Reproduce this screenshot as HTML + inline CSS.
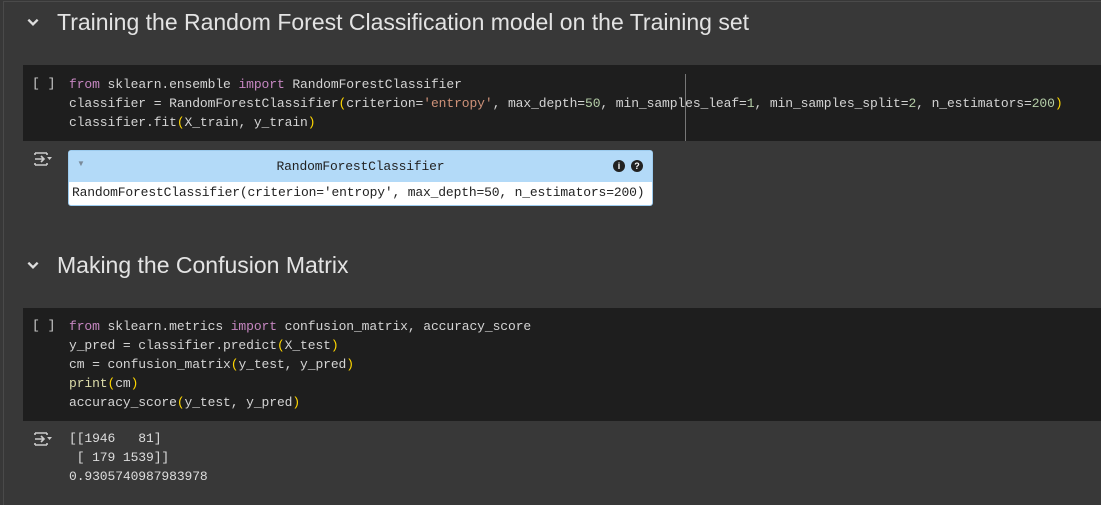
<!DOCTYPE html>
<html><head><meta charset="utf-8"><style>
*{margin:0;padding:0;box-sizing:border-box}
body{width:1101px;height:500px;background:#383838;position:relative;overflow:hidden;font-family:"Liberation Sans",sans-serif}
.frame{position:absolute;left:3px;top:1px;right:-5px;bottom:-5px;border-left:1px solid #4a4a4a;border-top:1px solid #4a4a4a}
.h{position:absolute;left:57px;color:#e3e3e3;font-size:23px;}
.chev{position:absolute;left:26px;width:14px;height:14px}
.cell{position:absolute;left:23px;right:0;background:#1e1e1e}
.code{position:absolute;left:69px;font-family:"Liberation Mono",monospace;font-size:13px;letter-spacing:-0.1px;line-height:19px;color:#d4d4d4;white-space:pre}
.br{position:absolute;left:32px;font-family:"Liberation Mono",monospace;font-size:13px;color:#ccc}
.k{color:#c586c0}.s{color:#ce9178}.n{color:#b5cea8}.y{color:#ffd700}
.oi{position:absolute;left:34px}
.m{font-family:'Liberation Mono',monospace;font-size:13px;letter-spacing:-0.17px}
</style></head><body>
<div class="frame"></div>
<svg class="chev" style="top:15px" viewBox="0 0 12 12"><path d="M2 4l4 4 4-4" stroke="#ddd" stroke-width="2" fill="none"/></svg>
<div class="h" style="top:9px">Training the Random Forest Classification model on the Training set</div>

<div class="cell" style="top:65px;height:76px"></div>
<div style="position:absolute;left:685px;top:74px;width:1px;height:67px;background:#777"></div>
<div class="br" style="top:76px">[ ]</div>
<div class="code" style="top:75px"><span class="k">from</span> sklearn.ensemble <span class="k">import</span> RandomForestClassifier
classifier = RandomForestClassifier<span class="y">(</span>criterion=<span class="s">'entropy'</span>, max_depth=<span class="n">50</span>, min_samples_leaf=<span class="n">1</span>, min_samples_split=<span class="n">2</span>, n_estimators=<span class="n">200</span><span class="y">)</span>
classifier.fit<span class="y">(</span>X_train, y_train<span class="y">)</span></div>

<svg class="oi" style="top:151px" width="18" height="16" viewBox="0 0 18 16"><path d="M1 2h12M1 14h12M1 2v2M13 2v2M1 12v2M13 12v2M1 8h9M7 5l3 3-3 3" stroke="#ccc" stroke-width="1.6" fill="none"/><path d="M13 6h5l-2.5 3z" fill="#ccc"/></svg>
<div style="position:absolute;left:68px;top:150px;width:585px;height:56px;background:#fff;border:1px solid #9ccbee;border-radius:3px;overflow:hidden">
 <div style="height:31px;background:#b3daf8;position:relative">
  <span style="position:absolute;left:8px;top:8px;font-size:8px;color:#7a8a99">▼</span>
  <span class="m" style="position:absolute;left:0;right:0;top:8px;text-align:center;color:#222">RandomForestClassifier</span>
  <span style="position:absolute;left:544px;top:9px;width:12px;height:12px;border-radius:6px;background:#222;color:#fff;font-size:9px;font-weight:bold;text-align:center;line-height:12px">i</span>
  <span style="position:absolute;left:562px;top:9px;width:12px;height:12px;border-radius:6px;background:#222;color:#fff;font-size:9px;font-weight:bold;text-align:center;line-height:12px">?</span>
 </div>
 <div class="m" style="position:absolute;left:3px;top:34px;color:#222;white-space:pre">RandomForestClassifier(criterion='entropy', max_depth=50, n_estimators=200)</div>
</div>

<svg class="chev" style="top:258px" viewBox="0 0 12 12"><path d="M2 4l4 4 4-4" stroke="#ddd" stroke-width="2" fill="none"/></svg>
<div class="h" style="top:252px">Making the Confusion Matrix</div>

<div class="cell" style="top:308px;height:113px"></div>
<div class="br" style="top:318px">[ ]</div>
<div class="code" style="top:317px"><span class="k">from</span> sklearn.metrics <span class="k">import</span> confusion_matrix, accuracy_score
y_pred = classifier.predict<span class="y">(</span>X_test<span class="y">)</span>
cm = confusion_matrix<span class="y">(</span>y_test, y_pred<span class="y">)</span>
<span style="color:#dcdcaa">print</span><span class="y">(</span>cm<span class="y">)</span>
accuracy_score<span class="y">(</span>y_test, y_pred<span class="y">)</span></div>

<svg class="oi" style="top:431px" width="18" height="16" viewBox="0 0 18 16"><path d="M1 2h12M1 14h12M1 2v2M13 2v2M1 12v2M13 12v2M1 8h9M7 5l3 3-3 3" stroke="#ccc" stroke-width="1.6" fill="none"/><path d="M13 6h5l-2.5 3z" fill="#ccc"/></svg>
<div class="code" style="top:429px;color:#ddd">[[1946   81]
 [ 179 1539]]
0.9305740987983978</div>
</body></html>
